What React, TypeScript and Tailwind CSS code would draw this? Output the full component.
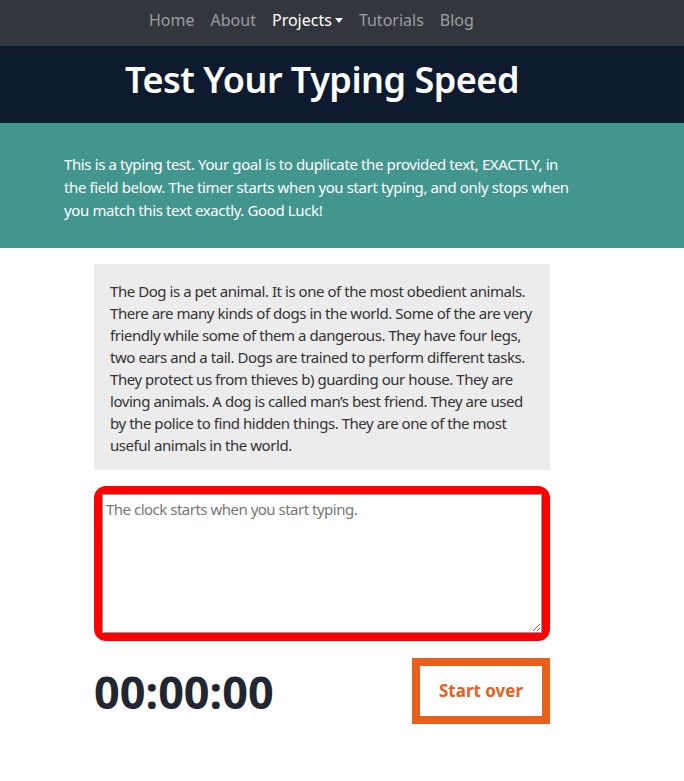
import React from "react";

export default function App() {
  return (
    <div className="w-[684px] min-h-[781px] bg-white" style={{ fontFamily: '"Noto Sans", "Open Sans", sans-serif' }}>
      <nav className="h-[46px] bg-[#33373d] flex items-start pt-[8px]">
        <ul className="flex items-center gap-[16px] pl-[149px] text-[16px] leading-[24px] text-[#9b9ea3]">
          <li>Home</li>
          <li>About</li>
          <li className="text-white flex items-center gap-[3px]">
            Projects
            <span className="inline-block w-0 h-0 border-l-[4px] border-r-[4px] border-t-[5px] border-l-transparent border-r-transparent border-t-white mt-[1px]" />
          </li>
          <li>Tutorials</li>
          <li>Blog</li>
        </ul>
      </nav>
      <header className="h-[77px] bg-[#0e1b2e] flex items-center pb-[9px]">
        <h1 className="w-[644px] text-center text-white text-[36px] font-semibold leading-none tracking-[-0.5px]">
          Test Your Typing Speed
        </h1>
      </header>
      <section className="h-[125px] bg-[#42968e] pt-[30px]">
        <p className="ml-[64px] w-[516px] text-white text-[15px] leading-[23px] tracking-[-0.38px]">
          This is a typing test. Your goal is to duplicate the provided text, EXACTLY, in the field below. The timer starts when you start typing, and only stops when you match this text exactly. Good Luck!
        </p>
      </section>
      <main className="ml-[94px] w-[456px] pt-[16px]">
        <div className="bg-[#ececec] px-[16px] pt-[16px] pb-[14px] text-[15px] leading-[22px] text-[#333] tracking-[-0.45px]">
          The Dog is a pet animal. It is one of the most obedient animals. There are many kinds of dogs in the world. Some of the are very friendly while some of them a dangerous. They have four legs, two ears and a tail. Dogs are trained to perform different tasks. They protect us from thieves b) guarding our house. They are loving animals. A dog is called man’s best friend. They are used by the police to find hidden things. They are one of the most useful animals in the world.
        </div>
        <div className="mt-[16px] border-[8px] border-[#ff0000] rounded-[12px] bg-[#ff0000]">
          <textarea
            className="block w-full h-[139px] bg-white border border-[#9a9a9a] px-[3px] py-[4px] text-[15px] leading-[20px] tracking-[-0.5px] placeholder:text-[#767676] outline-none"
            placeholder="The clock starts when you start typing."
          />
        </div>
        <div className="mt-[17px] flex items-center justify-between">
          <div className="text-[45px] font-bold text-[#212630] leading-none">00:00:00</div>
          <button className="w-[138px] h-[66px] border-[8px] border-[#e8601c] bg-white text-[#e8601c] text-[17px] font-bold">
            Start over
          </button>
        </div>
      </main>
    </div>
  );
}
